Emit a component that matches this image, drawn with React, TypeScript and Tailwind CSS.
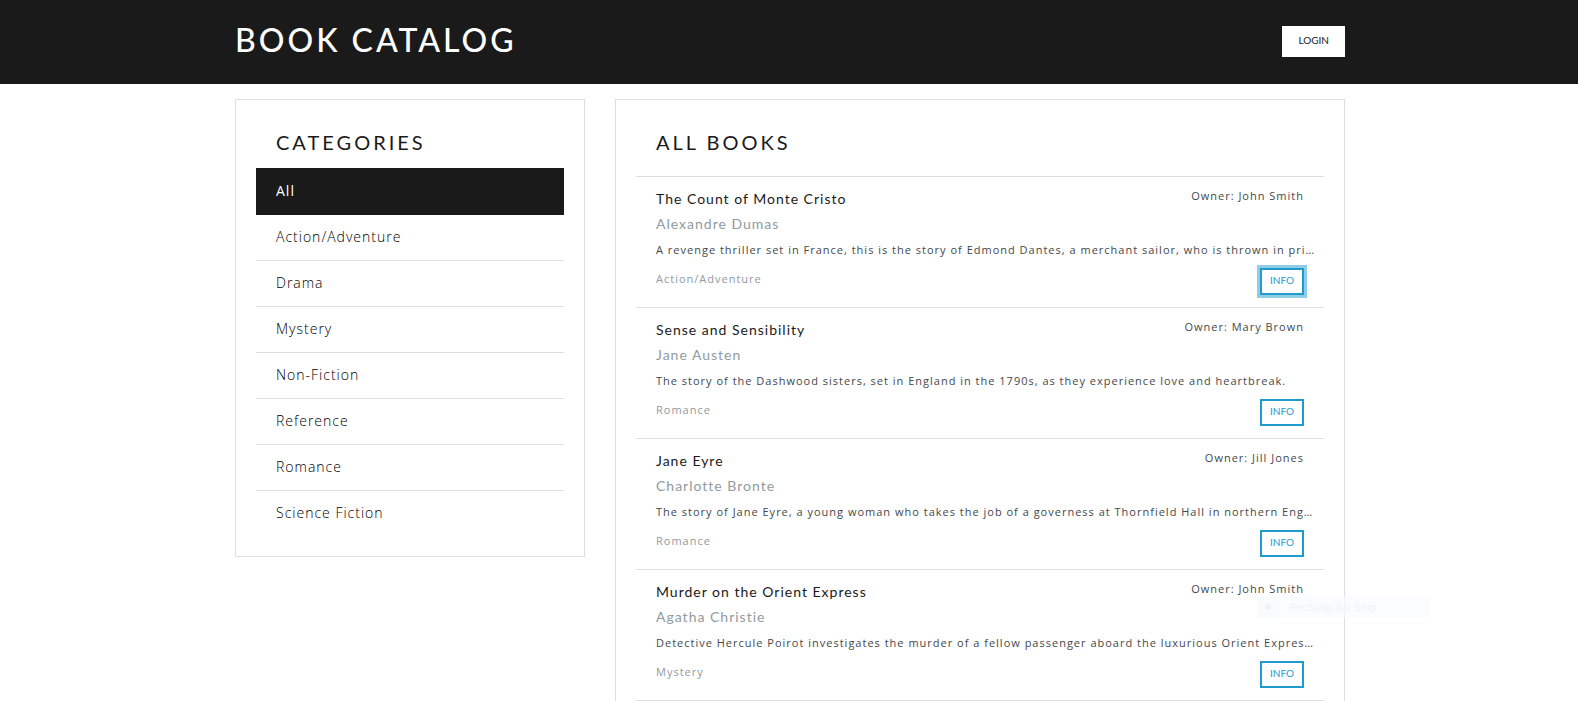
const categories = [
  "All",
  "Action/Adventure",
  "Drama",
  "Mystery",
  "Non-Fiction",
  "Reference",
  "Romance",
  "Science Fiction",
];

type Book = {
  title: string;
  author: string;
  description: string;
  category: string;
  owner: string;
};

const books: Book[] = [
  {
    title: "The Count of Monte Cristo",
    author: "Alexandre Dumas",
    description:
      "A revenge thriller set in France, this is the story of Edmond Dantes, a merchant sailor, who is thrown in pri…",
    category: "Action/Adventure",
    owner: "John Smith",
  },
  {
    title: "Sense and Sensibility",
    author: "Jane Austen",
    description:
      "The story of the Dashwood sisters, set in England in the 1790s, as they experience love and heartbreak.",
    category: "Romance",
    owner: "Mary Brown",
  },
  {
    title: "Jane Eyre",
    author: "Charlotte Bronte",
    description:
      "The story of Jane Eyre, a young woman who takes the job of a governess at Thornfield Hall in northern Eng…",
    category: "Romance",
    owner: "Jill Jones",
  },
  {
    title: "Murder on the Orient Express",
    author: "Agatha Christie",
    description:
      "Detective Hercule Poirot investigates the murder of a fellow passenger aboard the luxurious Orient Expres…",
    category: "Mystery",
    owner: "John Smith",
  },
];

function Header() {
  return (
    <header className="bg-[#1a1a1a] pt-5 pb-6 pl-0.5">
      <div className="mx-auto flex max-w-[1110px] items-start justify-between">
        <h1 className="text-[32px] leading-10 font-medium tracking-[3px] text-white uppercase">
          Book Catalog
        </h1>
        <button className="mt-1.5 bg-white px-4 pt-[7px] pb-2.5 text-[10px] leading-[14px] text-[#1a1a1a] uppercase">
          Login
        </button>
      </div>
    </header>
  );
}

function CategoryList() {
  return (
    <nav className="border border-[#dedede] p-5">
      <h2 className="px-5 pt-2.5 pb-3.5 text-[20px] leading-6 font-normal tracking-[3px] uppercase">
        Categories
      </h2>
      <ul className="font-['Open_Sans',sans-serif]">
        {categories.map((name, i) => (
          <li key={name} className="border-b border-[#dedede] first:border-[#1a1a1a] last:border-b-0">
            <a
              href="#"
              className={
                i === 0
                  ? "block bg-[#1a1a1a] px-5 py-3 text-[14px] leading-[22px] tracking-[1px] text-white"
                  : "block px-5 pt-[11px] pb-[13px] text-[14px] leading-[21px] font-light tracking-[1px] text-black"
              }
            >
              {name}
            </a>
          </li>
        ))}
      </ul>
    </nav>
  );
}

function BookItem({ book, focused }: { book: Book; focused: boolean }) {
  return (
    <li className="border-b border-[#dedede] px-5 pt-[9px] pb-3 tracking-[1px]">
      <div className="flex items-start justify-between">
        <h3 className="text-[14px] leading-[25px]">{book.title}</h3>
        <span className="font-['Open_Sans',sans-serif] text-[11px] leading-5 text-[#45484b]">
          Owner: {book.owner}
        </span>
      </div>
      <p className="text-[14px] leading-[25px] text-[#919aa1]">{book.author}</p>
      <p className="font-['Open_Sans',sans-serif] text-[11px] leading-[27px] text-[#45484b] lg:whitespace-nowrap">
        {book.description}
      </p>
      <div className="mt-[5px] flex items-start justify-between">
        <span className="font-['Open_Sans',sans-serif] text-[11px] leading-[22px] text-[#919aa1]">
          {book.category}
        </span>
        <button
          className={
            focused
              ? "min-w-11 border-2 border-[#1f9bcf] bg-white px-2 pt-[3px] pb-1.5 text-[10px] leading-[14px] tracking-normal text-[#1f9bcf] uppercase ring-3 ring-[#1f9bcf]/50"
              : "min-w-11 border-2 border-[#1f9bcf] bg-white px-2 pt-[3px] pb-1.5 text-[10px] leading-[14px] tracking-normal text-[#1f9bcf] uppercase"
          }
        >
          Info
        </button>
      </div>
    </li>
  );
}

function SnipHint() {
  return (
    <div className="absolute top-[596px] left-1/2 ml-[468px] flex h-[22px] w-[173px] items-center bg-[#f8fbff]/70 text-[12px] text-[#f2f2f4]">
      <span className="flex h-full w-[22px] items-center justify-center bg-[#f8fcff]">
        <span className="size-1.5 rounded-full bg-[#f2f2f4]" />
      </span>
      <span className="pl-2.5">Rectangular Snip</span>
    </div>
  );
}

export default function App() {
  return (
    <div className="relative bg-white font-['Lato',sans-serif] text-[#1a1a1a]">
      <Header />
      <main className="pt-[15px] pl-0.5">
        <div className="mx-auto grid max-w-[1110px] items-start gap-[30px] lg:grid-cols-[350px_minmax(0,1fr)]">
          <CategoryList />
          <section className="border border-[#dedede] p-5">
            <h2 className="px-5 pt-2.5 pb-[22px] text-[20px] leading-6 font-normal tracking-[3px] uppercase">
              All Books
            </h2>
            <ul className="border-t border-[#dedede]">
              {books.map((book, i) => (
                <BookItem key={book.title} book={book} focused={i === 0} />
              ))}
            </ul>
          </section>
        </div>
      </main>
      <SnipHint />
    </div>
  );
}
